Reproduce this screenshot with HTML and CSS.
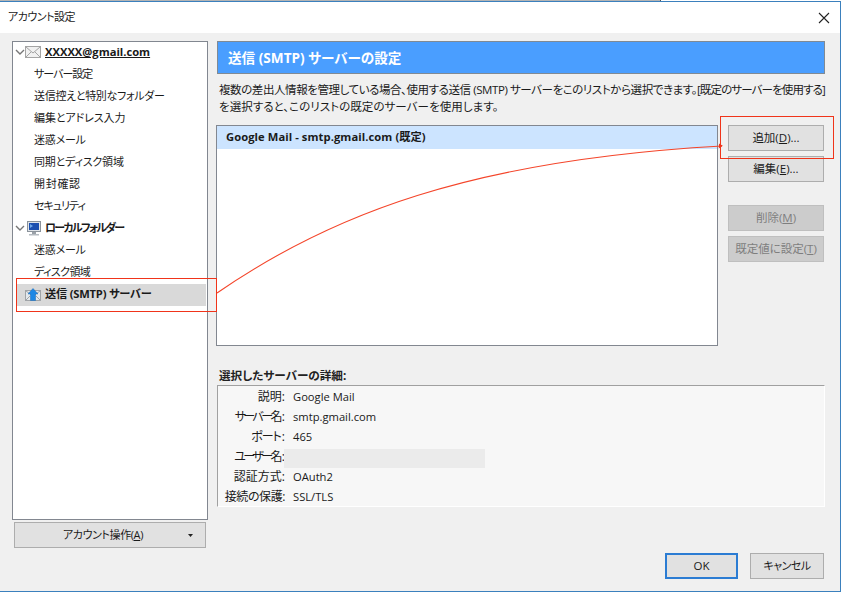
FILE: index.html
```html
<!DOCTYPE html>
<html lang="ja">
<head>
<meta charset="utf-8">
<title>アカウント設定</title>
<link rel="stylesheet" href="styles.css">
</head>
<body>
<div class="topedge"><span class="behind"></span></div>
<div class="dialog">
  <header class="titlebar">
    <span class="title">アカウント設定</span>
    <svg class="close" width="12" height="12" viewBox="0 0 12 12"><path d="M1 1l10 10M11 1L1 11" stroke="#222" stroke-width="1.1" fill="none"/></svg>
  </header>
  <div class="content">
    <aside class="left">
      <div class="tree">
        <div class="node account">
          <svg class="chev" width="10" height="6" viewBox="0 0 10 6"><path d="M1 1l4 4 4-4" stroke="#777" stroke-width="1.4" fill="none"/></svg>
          <svg class="nicon" width="16" height="12" viewBox="0 0 16 12"><rect x=".5" y=".5" width="15" height="11" fill="#f1f1f1" stroke="#a4a4a4"/><path d="M1 1l7 6 7-6M1 11l5-5M15 11l-5-5" stroke="#a4a4a4" fill="none"/></svg>
          <span class="acct">XXXXX@gmail.com</span>
        </div>
        <div class="item ls-n10">サーバー設定</div>
        <div class="item ls-n3">送信控えと特別なフォルダー</div>
        <div class="item ls-n1">編集とアドレス入力</div>
        <div class="item ls-n2">迷惑メール</div>
        <div class="item ls-n2">同期とディスク領域</div>
        <div class="item ls-p7">開封確認</div>
        <div class="item ls-n10">セキュリティ</div>
        <div class="node local">
          <svg class="chev" width="10" height="6" viewBox="0 0 10 6"><path d="M1 1l4 4 4-4" stroke="#777" stroke-width="1.4" fill="none"/></svg>
          <svg class="nicon" width="14" height="15" viewBox="0 0 14 15"><rect x=".5" y=".5" width="13" height="10" fill="#dfe3e8" stroke="#8b939b"/><rect x="2" y="2" width="10" height="7" fill="#1b4fb0"/><path d="M3 3l3 2-3 2z" fill="#6fa7e8"/><rect x="5" y="11" width="4" height="2" fill="#9aa1a8"/><rect x="2" y="13" width="10" height="1.5" fill="#b5bbc1"/></svg>
          <span class="bold tight">ローカルフォルダー</span>
        </div>
        <div class="item ls-n2">迷惑メール</div>
        <div class="item ls-n6">ディスク領域</div>
        <div class="node smtp">
          <svg class="nicon" width="16" height="13" viewBox="0 0 16 13"><rect x=".5" y="2.500" width="15" height="10" fill="#e3e8ec" stroke="#a0a4a8"/><path d="M1 3l7 5 7-5M1 12l4-4M15 12l-4-4" stroke="#a0a4a8" fill="none"/><path d="M8 .5l5 5.500H10.500v6.500h-5V6H3z" fill="#1e88e5" stroke="#1a68b5" stroke-width=".5"/></svg>
          <span class="bold ls-n2">送信 (SMTP) サーバー</span>
        </div>
      </div>
      <button class="btn acctbtn"><span class="acctlabel">アカウント操作(<u>A</u>)</span><svg class="caret" width="5" height="3" viewBox="0 0 5 3"><path d="M0 0h5L2.500 3z" fill="#222"/></svg></button>
    </aside>
    <main class="right">
      <h1 class="heading">送信 (SMTP) サーバーの設定</h1>
      <div class="desc">
        <p class="line1">複数の差出人情報を管理している場合、使用する送信 (SMTP) サーバーをこのリストから選択できます。<span class="lb">[既定のサーバーを使用する]</span></p>
        <p class="line2">を選択すると、このリストの既定のサーバーを使用します。</p>
      </div>
      <div class="listrow">
        <div class="list"><div class="selrow">Google Mail - smtp.gmail.com (既定)</div></div>
        <div class="actions">
          <button class="btn">追加(<u>D</u>)...</button>
          <button class="btn">編集(<u>E</u>)...</button>
          <button class="btn off gap">削除(<u>M</u>)</button>
          <button class="btn off">既定値に設定(<u>T</u>)</button>
        </div>
      </div>
      <div class="dlabel">選択したサーバーの詳細:</div>
      <dl class="details">
        <div class="drow"><dt>説明:</dt><dd>Google Mail</dd></div>
        <div class="drow"><dt><span class="kn">サーバー名</span>:</dt><dd>smtp.gmail.com</dd></div>
        <div class="drow"><dt><span class="kp">ポート</span>:</dt><dd>465</dd></div>
        <div class="drow"><dt><span class="kn">ユーザー名</span>:</dt><dd class="masked"></dd></div>
        <div class="drow"><dt>認証方式:</dt><dd>OAuth2</dd></div>
        <div class="drow"><dt class="dt-long">接続の保護:</dt><dd>SSL/TLS</dd></div>
      </dl>
    </main>
  </div>
  <footer class="footer">
    <button class="btn ok">OK</button>
    <button class="btn cancel">キャンセル</button>
  </footer>
</div>
<div class="note note-smtp"></div>
<div class="note note-add"></div>
<svg class="arrow" width="841" height="592" viewBox="0 0 841 592"><path d="M217 293C330 215 470 160 722 146" stroke="#f4452a" stroke-width="1.100" fill="none"/><path d="M719 143.500l-.2 5 4-2.700z" fill="#f0341a"/></svg>
</body>
</html>
```
FILE: styles.css
```css
* { box-sizing: border-box; }
html, body { margin: 0; padding: 0; }
body {
  width: 841px; height: 592px; position: relative; overflow: hidden; background: #fff;
  font: 11.2px/20px "Open Sans", "Noto Sans CJK JP", sans-serif;
  font-feature-settings: "palt";
  color: #1a1a1a;
}
.topedge { height: 1px; background: #fff; position: relative; }
.behind { position: absolute; left: 0; width: 661px; height: 1px; background: #b4b4b4; border-right: 1px solid #555; }
.dialog {
  width: 841px; height: 591px; border: 1px solid #3b80bd; border-left: 0;
  background: #f0f0f0; display: flex; flex-direction: column;
}
.titlebar { height: 31px; background: #fff; display: flex; align-items: center; justify-content: space-between; padding: 0 10px 0 8px; flex: none; }
.title { font-size: 11px; line-height: 18px; padding-bottom: 2px; letter-spacing: -.5px; color: #222; }
.content { display: flex; padding: 8px 15px 0 12px; gap: 9px; flex: none; height: 507px; }
.left { width: 196px; flex: none; display: flex; flex-direction: column; }
.tree { height: 479px; background: #fff; border: 1px solid #828790; flex: none; }
.node, .item { height: 22px; line-height: 20px; white-space: nowrap; }
.item { padding-left: 21px; font-size: 11px; }
.ls-n10 { letter-spacing: -1px; }
.ls-n6 { letter-spacing: -.6px; }
.ls-n3 { letter-spacing: -.3px; }
.ls-n2 { letter-spacing: -.2px; }
.ls-n1 { letter-spacing: -.1px; }
.ls-p7 { letter-spacing: .7px; }
.node { display: flex; align-items: center; padding: 0 0 2px 2px; }
.chev { flex: none; }
.nicon { flex: none; margin-right: 4px; }
.local .nicon { margin-left: 2px; }
.acct { font-weight: 700; text-decoration: underline; font-size: 11.2px; }
.bold { font-weight: 700; }
.tight { font-size: 11px; letter-spacing: -1.700px; }
.smtp { background: #d9d9d9; margin: 0 1px 0 4px; padding-left: 8px; }
.btn {
  font: inherit; font-size: 11.5px; font-feature-settings: inherit; color: #1a1a1a; background: #e1e1e1; border: 1px solid #adadad;
  padding: 0; height: 26px; line-height: 22px; display: block; border-radius: 0;
}
.btn u { text-underline-offset: 1px; }
.acctbtn { margin: 2px 2px 0 2px; width: 192px; flex: none; position: relative; font-size: 11px; letter-spacing: -.4px; }
.acctlabel { position: relative; left: -7px; }
.caret { position: absolute; right: 12px; top: 11px; }
.right { width: 608px; flex: none; }
.heading {
  margin: 0; height: 33px; background: #4a9eff; border: 1px solid #808a94; color: #fff;
  font-size: 13.6px; font-weight: 700; line-height: 31px; padding-left: 10px;
}
.desc { margin: 7px 0 0 2px; line-height: 17px; font-size: 11.5px; white-space: nowrap; height: 34px; }
.desc p { margin: 0; }
.line1 { letter-spacing: -.42px; }
.lb { letter-spacing: -.87px; }
.line2 { letter-spacing: .06px; }
.listrow { display: flex; margin-top: 10px; margin-left: -1px; height: 221px; }
.list { width: 502px; flex: none; background: #fff; border: 1px solid #828790; }
.selrow { height: 23px; line-height: 21px; background: #cce4ff; font-weight: 700; padding-left: 9px; letter-spacing: .08px; }
.actions { margin-left: 10px; width: 96px; flex: none; }
.actions .btn { width: 96px; margin-bottom: 5px; }
.actions .gap { margin-top: 23px; }
.off { background: #cccccc; color: #7e7e7e; border-color: #bfbfbf; }
.dlabel { margin: 20px 0 0 2px; height: 19px; line-height: 20px; font-size: 11.6px; font-weight: 700; color: #222; }
.details { margin: 0; height: 122px; background: #f7f7f7; border: 1px solid #fff; border-top-color: #a0a0a0; border-left-color: #a0a0a0; }
.drow { display: flex; height: 20px; line-height: 21px; }
dt { width: 67px; text-align: right; flex: none; font-size: 12px; white-space: nowrap; }
.dt-long { letter-spacing: -.4px; }
.kn { letter-spacing: -2.600px; margin-right: 2px; }
.kp { letter-spacing: -1px; margin-right: 1px; }
dd { margin: 0 0 0 8px; }
.masked { background: #ebebeb; width: 201px; margin: 3px 0 -2px -1px; }
.footer { display: flex; justify-content: flex-end; gap: 12px; padding: 13px 16px 0 0; flex: none; }
.ok { width: 73px; border: 2px solid #2b7cd3; }
.cancel { width: 74px; letter-spacing: -.5px; font-size: 11px; }
.note { position: absolute; border: 1px solid #f0341a; }
.note-smtp { left: 16px; top: 278px; width: 201px; height: 34px; }
.note-add { left: 720px; top: 116px; width: 114px; height: 43px; }
.arrow { position: absolute; left: 0; top: 0; pointer-events: none; }
```
